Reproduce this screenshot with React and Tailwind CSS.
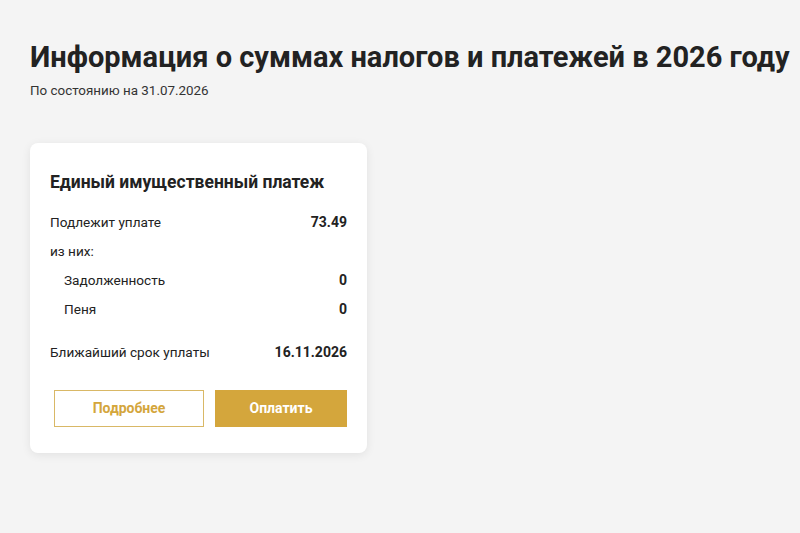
import React from "react";

const Row = ({ label, value, indent, bold = true, className = "" }) => (
  <div className={`flex justify-between items-center text-[13.6px] ${className}`}>
    <span className={indent ? "pl-[14px]" : ""}>{label}</span>
    {value !== undefined && (
      <span className={bold ? "font-bold text-[14px] text-[#222]" : ""}>{value}</span>
    )}
  </div>
);

export default function App() {
  return (
    <div
      className="min-h-[533px] bg-[#f4f4f4] text-[#222] pl-[30px] pt-[38px]"
      style={{ fontFamily: "Roboto, 'Noto Sans', sans-serif" }}
    >
      <h1 className="text-[29px] font-bold leading-[38px] whitespace-nowrap">
        Информация о суммах налогов и платежей в 2026 году
      </h1>
      <p className="text-[13.4px] text-[#333] mt-[6px] leading-[18px]">
        По состоянию на 31.07.2026
      </p>

      <div className="mt-[43px] w-[337px] bg-white rounded-[8px] shadow-[0_2px_10px_rgba(0,0,0,0.08)] px-[20px] pt-[27px] pb-[26px]">
        <h2 className="text-[17.5px] font-bold leading-[24px]">
          Единый имущественный платеж
        </h2>
        <div className="mt-[17px] flex flex-col">
          <Row label="Подлежит уплате" value="73.49" className="h-[22px]" />
          <Row label="из них:" className="h-[22px] mt-[7px]" />
          <Row label="Задолженность" value="0" indent className="h-[22px] mt-[7px]" />
          <Row label="Пеня" value="0" indent className="h-[22px] mt-[7px]" />
          <Row label="Ближайший срок уплаты" value="16.11.2026" className="h-[22px] mt-[21px]" />
        </div>
        <div className="mt-[27px] flex gap-[11px] pl-[4px]">
          <button className="w-[150px] h-[37px] border border-[#d9b866] text-[#d4a63c] font-bold text-[14px] bg-white">
            Подробнее
          </button>
          <button className="w-[132px] h-[37px] bg-[#d4a63c] text-white font-bold text-[14px]">
            Оплатить
          </button>
        </div>
      </div>
    </div>
  );
}
